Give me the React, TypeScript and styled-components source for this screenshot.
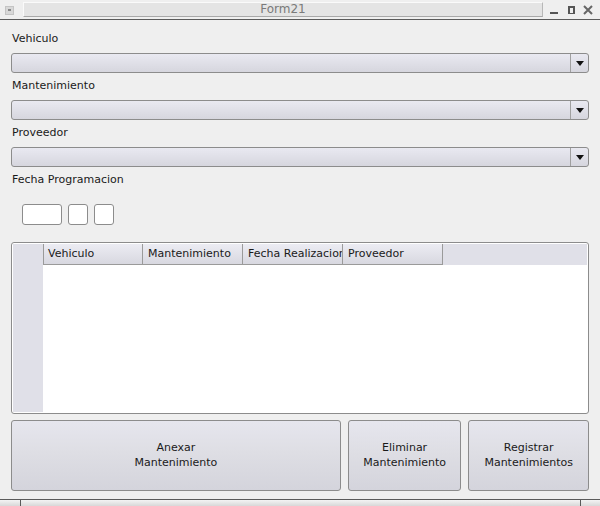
import React from "react";
import styled, { createGlobalStyle } from "styled-components";

const Global = createGlobalStyle`
  html, body { margin: 0; padding: 0; background: #efefef; }
  body { font-family: "DejaVu Sans", sans-serif; font-size: 11px; color: #1a1a1a; }
`;

const Window = styled.div`
  width: 600px;
  height: 506px;
  display: flex;
  flex-direction: column;
  background: #efefef;
  overflow: hidden;
`;

const TitleBar = styled.div`
  height: 20px;
  flex: none;
  box-sizing: border-box;
  border-bottom: 1px solid #5a5a5a;
  display: flex;
  align-items: center;
  padding: 0 4px 0 5px;
`;

const AppIcon = styled.div`
  width: 9px;
  height: 9px;
  margin-top: 1px;
  box-sizing: border-box;
  background: #d8d8d8;
  border: 1px solid #c4c4c4;
  display: flex;
  align-items: center;
  justify-content: center;
  &::after {
    content: "";
    width: 3px;
    height: 2px;
    background: #888;
  }
`;

const TitleField = styled.div`
  margin-left: 9px;
  width: 520px;
  height: 15px;
  box-sizing: border-box;
  background: #e4e4e4;
  border-top: 1px solid #fafafa;
  border-left: 1px solid #fafafa;
  border-right: 1px solid #b8b8b8;
  border-bottom: 1px solid #a8a8a8;
  color: #7a7a7a;
  font-size: 12px;
  text-align: center;
  line-height: 13px;
`;

const WinButtons = styled.div`
  display: flex;
  align-items: center;
  margin-left: 6px;
  gap: 7px;
`;

const Body = styled.div`
  flex: 1;
  display: flex;
  flex-direction: column;
  padding: 12px 11px 0 11px;
`;

const Label = styled.div`
  height: 14px;
  line-height: 14px;
  padding-left: 1px;
  margin-bottom: 7px;
`;

const Combo = styled.div`
  height: 20px;
  flex: none;
  box-sizing: border-box;
  border: 1px solid #8c8c8c;
  border-radius: 3px;
  background: linear-gradient(#e9e9f1, #d6d6de);
  display: flex;
  justify-content: flex-end;
  margin-bottom: 6px;
`;

const ComboArrow = styled.div`
  width: 17px;
  border-left: 1px solid #a0a0a0;
  display: flex;
  align-items: center;
  justify-content: center;
  &::after {
    content: "";
    border-left: 4px solid transparent;
    border-right: 4px solid transparent;
    border-top: 5px solid #111;
    margin-top: 1px;
  }
`;

const DateRow = styled.div`
  display: flex;
  gap: 6px;
  padding-left: 11px;
  margin-top: 10px;
  margin-bottom: 17px;
`;

const DateBox = styled.div<{ $w: number }>`
  width: ${(p) => p.$w}px;
  height: 21px;
  box-sizing: border-box;
  border: 1px solid #8c8c8c;
  border-radius: 3px;
  background: #fff;
`;

const Table = styled.div`
  height: 172px;
  flex: none;
  box-sizing: border-box;
  border: 1px solid #8c8c8c;
  border-radius: 3px;
  background: #fff;
  padding: 1px;
  display: grid;
  grid-template-columns: 30px 1fr;
  grid-template-rows: 21px 1fr;
  margin-bottom: 6px;
`;

const Corner = styled.div`
  background: #e0e0e8;
`;

const HeaderRow = styled.div`
  display: flex;
  background: #e0e0e8;
`;

const HeadCell = styled.div`
  width: 100px;
  box-sizing: border-box;
  border: 1px solid #9a9a9a;
  border-left: none;
  border-top: none;
  background: linear-gradient(#ececf3, #d8d8e0);
  padding-left: 5px;
  line-height: 20px;
  white-space: nowrap;
  overflow: hidden;
  &:first-child { border-left: 1px solid #9a9a9a; padding-left: 4px; }
`;

const RowHeads = styled.div`
  background: #e0e0e8;
`;

const TableBody = styled.div`
  background: #fff;
`;

const Buttons = styled.div`
  display: flex;
  gap: 7px;
  height: 71px;
  flex: none;
`;

const Button = styled.button<{ $w: number }>`
  width: ${(p) => p.$w}px;
  height: 71px;
  box-sizing: border-box;
  border: 1px solid #8c8c8c;
  border-radius: 3px;
  background: linear-gradient(#e6e6ee, #dedee4 45%, #d4d4dc);
  font-family: "DejaVu Sans", sans-serif;
  font-size: 11px;
  color: #1a1a1a;
  line-height: 15px;
  padding: 0 0 2px 0;
`;

const StatusBar = styled.div`
  margin-top: auto;
  flex: none;
  height: 6px;
  border-top: 1px solid #5a5a5a;
  display: flex;
  background: #e0e0e0;
`;

const StatusSeg = styled.div<{ $w?: number }>`
  ${(p) => (p.$w ? `width: ${p.$w}px;` : "flex: 1;")}
  border-right: 1px solid #5a5a5a;
  background: linear-gradient(#f4f4f4, #d8d8d8);
  &:last-child { border-right: none; }
`;

export default function App() {
  return (
    <>
      <Global />
      <Window>
        <TitleBar>
          <AppIcon />
          <TitleField>Form21</TitleField>
          <WinButtons>
            <svg width="10" height="10" viewBox="0 0 10 10">
              <rect x="1" y="7" width="8" height="2" fill="#555" />
            </svg>
            <svg width="10" height="10" viewBox="0 0 10 10">
              <rect x="2" y="1" width="7" height="8" fill="#555" />
              <rect x="4" y="3" width="3" height="5" fill="#eee" />
            </svg>
            <svg width="10" height="10" viewBox="0 0 10 10">
              <path d="M1 1 L9 9 M9 1 L1 9" stroke="#666" strokeWidth="2" />
            </svg>
          </WinButtons>
        </TitleBar>
        <Body>
          <Label>Vehiculo</Label>
          <Combo><ComboArrow /></Combo>
          <Label>Mantenimiento</Label>
          <Combo><ComboArrow /></Combo>
          <Label>Proveedor</Label>
          <Combo><ComboArrow /></Combo>
          <Label>Fecha Programacion</Label>
          <DateRow>
            <DateBox $w={40} />
            <DateBox $w={20} />
            <DateBox $w={20} />
          </DateRow>
          <Table>
            <Corner />
            <HeaderRow>
              <HeadCell>Vehiculo</HeadCell>
              <HeadCell>Mantenimiento</HeadCell>
              <HeadCell>Fecha Realizacion</HeadCell>
              <HeadCell>Proveedor</HeadCell>
            </HeaderRow>
            <RowHeads />
            <TableBody />
          </Table>
          <Buttons>
            <Button $w={331}>Anexar<br />Mantenimiento</Button>
            <Button $w={114}>Eliminar<br />Mantenimiento</Button>
            <Button $w={121}>Registrar<br />Mantenimientos</Button>
          </Buttons>
        </Body>
        <StatusBar>
          <StatusSeg $w={20} />
          <StatusSeg />
          <StatusSeg $w={19} />
        </StatusBar>
      </Window>
    </>
  );
}
